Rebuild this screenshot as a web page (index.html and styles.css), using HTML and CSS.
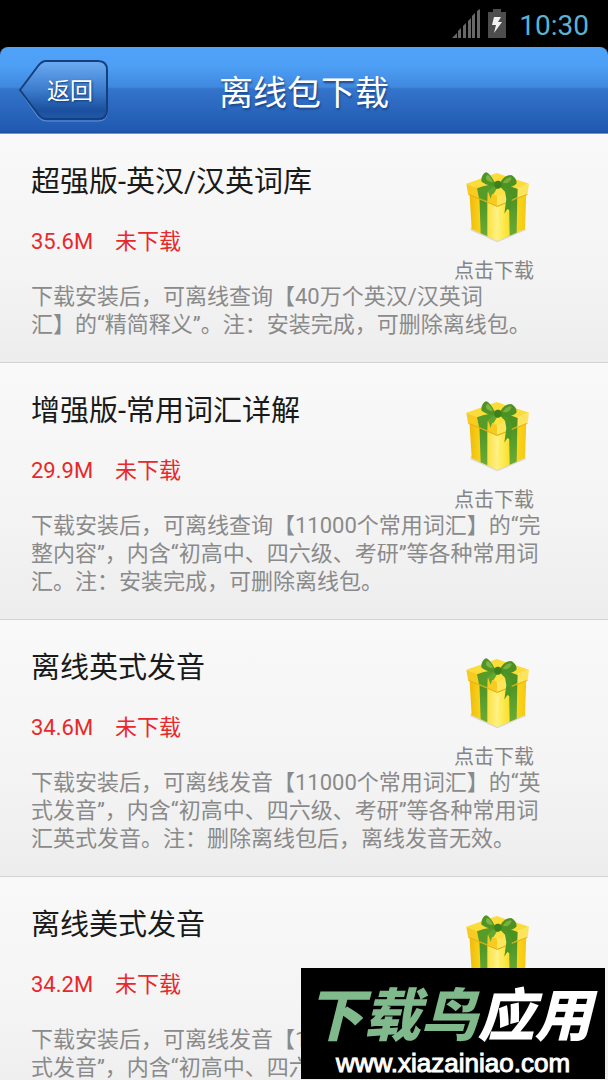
FILE: index.html
```
<!DOCTYPE html>
<html lang="zh-CN">
<head>
    <meta charset="UTF-8">
    <meta name="viewport" content="width=device-width, initial-scale=1.0">
    <title>离线包下载</title>
    <link rel="stylesheet" href="styles.css">
</head>
<body>

<!-- Shared gift icon -->
<svg class="defs" width="0" height="0" aria-hidden="true">
    <defs>
        <linearGradient id="boxLeft" x1="0" x2="1">
            <stop offset="0" stop-color="#f0b90c"/>
            <stop offset="0.5" stop-color="#fbdc1e"/>
            <stop offset="1" stop-color="#fff08a"/>
        </linearGradient>
        <linearGradient id="boxRight" x1="0" x2="1">
            <stop offset="0" stop-color="#fff27a"/>
            <stop offset="0.4" stop-color="#fbe02c"/>
            <stop offset="1" stop-color="#f6c90f"/>
        </linearGradient>
        <linearGradient id="ribbon" x1="0" y1="0" x2="0" y2="1">
            <stop offset="0" stop-color="#4b9224"/>
            <stop offset="1" stop-color="#6bab35"/>
        </linearGradient>
        <symbol id="gift" viewBox="-3 18 240 240">
            <path d="M46 208 L127 244 L213 207 L210 200 L48 198Z" fill="#dcd8cc"/>
            <path d="M43 92 L127 126 L127 240 L50 204Z" fill="url(#boxLeft)"/>
            <path d="M127 126 L214 92 L210 204 L127 240Z" fill="url(#boxRight)"/>
            <path d="M73 104 L97 116 L97 226 L77 217Z" fill="url(#ribbon)"/>
            <path d="M162 112 L187 102 L185 215 L164 224Z" fill="url(#ribbon)"/>
            <path d="M34 68 L125 36 L222 68 L127 106Z" fill="#fcdc38"/>
            <path d="M34 68 L127 104 L127 134 L39 98Z" fill="#f8cb20"/>
            <path d="M127 104 L222 68 L218 98 L127 134Z" fill="#fce45c"/>
            <path d="M100 90 L130 76 L160 90 L127 106Z" fill="#fde23f"/>
            <path d="M39 98 L127 134 L218 98 L217 101 L127 138 L40 101Z" fill="#e2ae12"/>
            <path d="M66 82 L84 76 L112 70 L126 76 L98 94 L97 121 L72 111Z" fill="#579b29"/>
            <path d="M146 72 L166 76 L188 84 L187 109 L163 119 L160 94 L134 76Z" fill="#4c9222"/>
            <path d="M118 76 L98 90 L101 97 L107 113 L111 100 L116 98 L130 76Z" fill="#63a630"/>
            <path d="M134 76 L150 92 L154 114 L148 158 L157 144 L168 150 L171 104 L157 82Z" fill="#4e9625"/>
            <path d="M122 68 C112 54 105 36 93 34 C84 36 78 51 79 61 C88 70 108 78 122 74Z" fill="#4f9526"/>
            <path d="M114 64 C110 54 104 43 97 42 C92 45 92 53 96 58 C102 62 108 64 114 64Z" fill="#7bb544"/>
            <path d="M135 68 C140 51 157 42 168 42 C179 46 187 60 184 68 C172 81 151 80 136 76Z" fill="#4c9123"/>
            <path d="M143 66 C150 54 160 48 168 49 C173 53 163 64 156 67Z" fill="#76b03f"/>
            <path d="M118 65 C124 57 135 58 139 65 C143 76 135 85 126 83 C119 81 116 74 118 65Z" fill="#3c811b"/>
        </symbol>
    </defs>
</svg>

<div class="screen">
    <div class="status-bar">
        <svg class="signal" width="28" height="30" viewBox="0 0 28 30" fill="#686868">
            <path d="M0 29 L5 24 V29Z"/>
            <path d="M6 22 L9 19 V29 H6Z"/>
            <path d="M11 17 L14 14 V29 H11Z"/>
            <path d="M16 12 L19 9 V29 H16Z"/>
            <path d="M20 7 L23 4 V29 H20Z"/>
            <path d="M25 2 L28 0 V29 H25Z"/>
        </svg>
        <svg class="battery" width="18" height="30" viewBox="0 0 18 30">
            <path d="M5 0 H13 V3 H18 V29 H0 V3 H5Z" fill="#4d4d4d"/>
            <path d="M6 8 L13 8 L10 13 H14 L6 24 L8 16 H4Z" fill="#f2f2f2"/>
        </svg>
        <span class="clock">10:30</span>
    </div>

    <div class="header">
        <button class="back" type="button">
            <svg class="back-shape" width="92" height="62" viewBox="0 0 92 62" aria-hidden="true">
                <defs>
                    <linearGradient id="backFill" x1="0" y1="0" x2="0" y2="1">
                        <stop offset="0" stop-color="#6dacf4"/>
                        <stop offset="0.5" stop-color="#3b7ccd"/>
                        <stop offset="0.85" stop-color="#1b509f"/>
                        <stop offset="1" stop-color="#2058a8"/>
                    </linearGradient>
                </defs>
                <path d="M2 31 L20 7 Q24 3 28 3 H80 Q89 3 89 11 V53 Q89 61 80 61 H28 Q24 61 20 57Z" fill="none" stroke="#5c93dc" stroke-width="1"/>
                <path d="M2 30 L20 6 Q24 1 28 1 H80 Q89 1 89 10 V50 Q89 59 80 59 H28 Q24 59 20 54Z" fill="url(#backFill)" stroke="#143f7d" stroke-width="2"/>
            </svg>
            <span class="back-text">返回</span>
        </button>
        <h1>离线包下载</h1>
    </div>

    <div class="list">
        <div class="item">
            <div class="info">
                <h2>超强版-英汉/汉英词库</h2>
                <p class="state"><span>35.6M</span><span>未下载</span></p>
            </div>
            <button class="download" type="button">
                <svg width="80" height="80"><use href="#gift"/></svg>
                <span>点击下载</span>
            </button>
            <p class="desc">下载安装后，可离线查询【40万个英汉/汉英词<br>汇】的“精简释义”。注：安装完成，可删除离线包。</p>
        </div>

        <div class="item">
            <div class="info">
                <h2>增强版-常用词汇详解</h2>
                <p class="state"><span>29.9M</span><span>未下载</span></p>
            </div>
            <button class="download" type="button">
                <svg width="80" height="80"><use href="#gift"/></svg>
                <span>点击下载</span>
            </button>
            <p class="desc">下载安装后，可离线查询【11000个常用词汇】的“完<br>整内容”，内含“初高中、四六级、考研”等各种常用词<br>汇。注：安装完成，可删除离线包。</p>
        </div>

        <div class="item">
            <div class="info">
                <h2>离线英式发音</h2>
                <p class="state"><span>34.6M</span><span>未下载</span></p>
            </div>
            <button class="download" type="button">
                <svg width="80" height="80"><use href="#gift"/></svg>
                <span>点击下载</span>
            </button>
            <p class="desc">下载安装后，可离线发音【11000个常用词汇】的“英<br>式发音”，内含“初高中、四六级、考研”等各种常用词<br>汇英式发音。注：删除离线包后，离线发音无效。</p>
        </div>

        <div class="item">
            <div class="info">
                <h2>离线美式发音</h2>
                <p class="state"><span>34.2M</span><span>未下载</span></p>
            </div>
            <button class="download" type="button">
                <svg width="80" height="80"><use href="#gift"/></svg>
                <span>点击下载</span>
            </button>
            <p class="desc">下载安装后，可离线发音【11000个常用词汇】的“美<br>式发音”，内含“初高中、四六级、考研”等各种常用词</p>
        </div>
    </div>
</div>

<!-- Site badge -->
<div class="badge">
    <div class="badge-name"><span>下载鸟</span>应用</div>
    <div class="badge-url">www.xiazainiao.com</div>
</div>

</body>
</html>
```
FILE: styles.css
```
/* General Styles */
* {
    box-sizing: border-box;
}

body {
    font-family: Roboto, "Noto Sans CJK SC", sans-serif;
    background-color: #000;
    margin: 0;
}

h1, h2, p {
    margin: 0;
    font-weight: normal;
}

button {
    border: 0;
    padding: 0;
    background: none;
    font-family: inherit;
    cursor: pointer;
}

.defs {
    position: absolute;
}

.screen {
    height: 100vh;
    overflow: hidden;
}

/* Status bar */
.status-bar {
    display: flex;
    justify-content: flex-end;
    align-items: center;
    height: 47px;
    padding-right: 19px;
}

.battery {
    margin: 0 13px 0 8px;
}

.clock {
    font-size: 28px;
    line-height: 32px;
    padding-top: 4px;
    color: #5bb2d4;
}

/* Header */
.header {
    display: grid;
    grid-template-columns: 110px 1fr 110px;
    align-items: center;
    height: 87px;
    border-top: 1px solid #6a9fdc;
    border-bottom: 1px solid #6f94c8;
    border-radius: 8px 8px 0 0;
    background: linear-gradient(#50a1f8, #4ea0f7 20%, #3f88de 46%, #3474cb 48%, #2159b0 97%, #1d50a0);
}

.header h1 {
    padding-top: 4px;
    font-size: 34px;
    line-height: 48px;
    text-align: center;
    color: #fff;
    text-shadow: 1px 2px 2px #1d4787;
}

.back {
    position: relative;
    width: 92px;
    height: 62px;
    margin-left: 18px;
}

.back-shape {
    position: absolute;
    top: 0;
    left: 0;
}

.back-text {
    position: relative;
    display: block;
    padding: 2px 0 0 12px;
    font-size: 23px;
    line-height: 32px;
    color: #fff;
    text-shadow: 1px 1px 2px #123a75;
}

/* Package list */
.item {
    display: grid;
    grid-template-columns: 1fr 100px;
    padding: 1px 64px 23px 31px;
    border-bottom: 1px solid #d2d2d2;
    background: linear-gradient(#f9f9f9, #f4f4f4 60%, #ededed);
}

.info {
    padding-top: 27px;
}

.item h2 {
    font-size: 29px;
    line-height: 40px;
    color: #1a1a1a;
}

.state {
    display: flex;
    gap: 22px;
    margin-top: 26px;
    font-size: 22px;
    line-height: 28px;
    color: #e8282b;
}

.download {
    display: flex;
    flex-direction: column;
    align-items: center;
    gap: 12px;
    padding-top: 32px;
    font-size: 20px;
    line-height: 24px;
    color: #858585;
}

.desc {
    grid-column: 1 / 3;
    font-size: 22px;
    line-height: 28px;
    white-space: nowrap;
    color: #8a8a8a;
}

/* Site badge */
.badge {
    position: fixed;
    right: 3px;
    bottom: 1px;
    width: 304px;
    height: 111px;
    padding-top: 17px;
    background-color: #000;
    color: #fff;
    text-align: center;
}

.badge-name {
    padding-right: 8px;
    font-size: 57px;
    font-weight: 900;
    font-style: italic;
    line-height: 64px;
    white-space: nowrap;
}

.badge-name span {
    color: #7fb98c;
}

.badge-url {
    font-family: "Liberation Sans", Arial, sans-serif;
    font-size: 26px;
    line-height: 28px;
    -webkit-text-stroke: 1px #fff;
}
```
